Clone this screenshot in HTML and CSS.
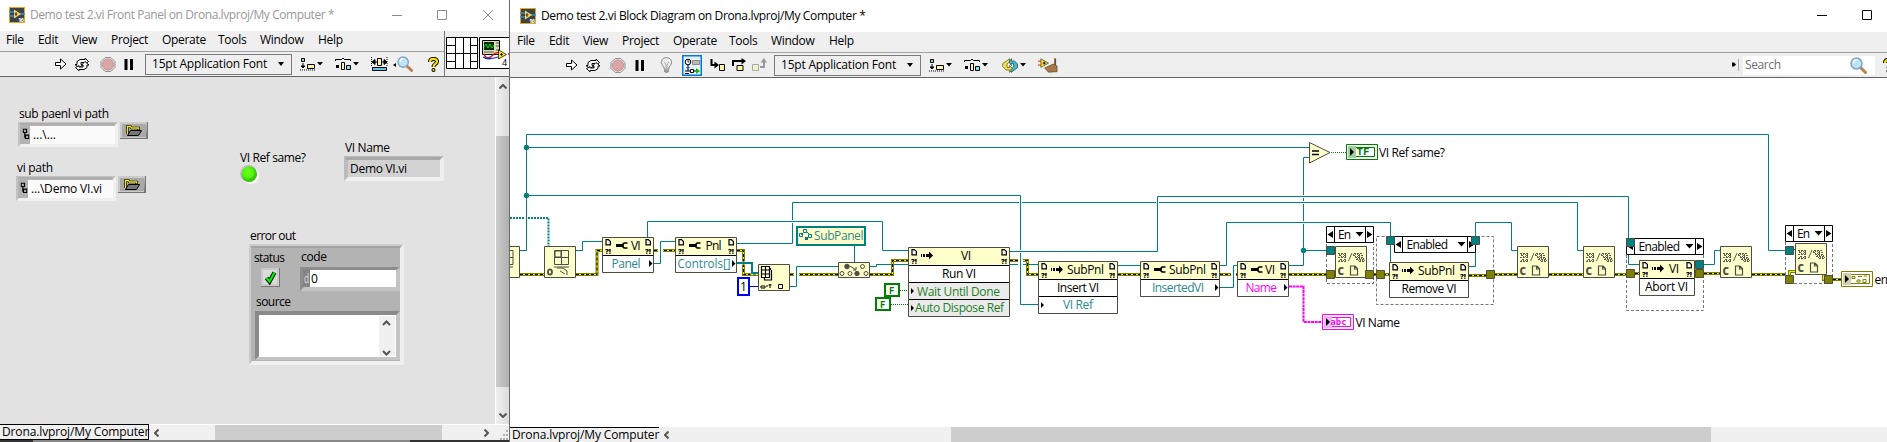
FILE: index.html
```html
<!DOCTYPE html>
<html lang="en">
<head>
<meta charset="utf-8">
<title>Demo test 2.vi</title>
<link rel="stylesheet" href="styles.css">
</head>
<body>
<svg class="defs" width="0" height="0">
  <defs>
    <symbol id="i-app" viewBox="0 0 16 16"><rect width="16" height="16" fill="#e3a81e"/><rect x="1" y="1" width="14" height="14" fill="#3c4248"/><path d="M0 5h5M0 9h5M11 7h5" stroke="#3a8bd0" stroke-width="1.5"/><path d="M5 2.5v9l7-4.500z" fill="#ffd85a"/><path d="M7 5v4M5.500 7h3" stroke="#333"/><text x="9" y="15" font-size="6" font-weight="700" fill="#fff" textLength="6">16</text></symbol>
    <symbol id="i-run" viewBox="0 0 12 12"><path d="M.5 4.500h5V1l5.500 5-5.500 5V7.500h-5z" fill="#fff" stroke="#000"/></symbol>
    <symbol id="i-cont" viewBox="0 0 16 14"><path d="M3 7V4l3-2h5V.7l3.500 3.300-3.500 3V5H7v2h2L5 10.500 1 7z" fill="#fff" stroke="#000"/><path d="M13 7.500v2.500l-3 2H5v1.300L1.500 10 5 8v1.500h4V7.500H7.500L11 4l4 3.500z" fill="#fff" stroke="#000"/></symbol>
    <symbol id="i-abort" viewBox="0 0 16 16"><path d="M5 .5h6L15.500 5v6L11 15.500H5L.5 11V5z" fill="#e8e8e8" stroke="#8a8a8a"/><circle cx="8" cy="8" r="6" fill="#dba6a6" stroke="#b98686" stroke-width=".8"/></symbol>
    <symbol id="i-pause" viewBox="0 0 10 11"><path d="M.5 0h3v11h-3zM6 0h3v11H6z" fill="#000"/></symbol>
    <symbol id="i-align" viewBox="0 0 23 14"><path d="M1.500 1.500h3v3h-3z" fill="#7fe0f0" stroke="#000"/><path d="M3 6v4M1 9l2 2 2-2z" stroke="#000"/><path d="M7.500 7.500h7v4h-7z" fill="#fff4a0" stroke="#000"/><path d="M0 13h16" stroke="#000" stroke-dasharray="1 1"/><path d="M17 5h6l-3 3.500z"/></symbol>
    <symbol id="i-dist" viewBox="0 0 24 14"><path d="M.5 4V2.500h6l1.500-1.500 1.500 1.500h6V4" fill="none" stroke="#000"/><path d="M1 8h3v3H1z"/><path d="M6.500 5.500h3v7h-3z" fill="#fff4a0" stroke="#000"/><path d="M11.500 8.500h4v4h-4z" fill="#7fe0f0" stroke="#000"/><path d="M18 5h6l-3 3.500z"/></symbol>
    <symbol id="i-size" viewBox="0 0 17 14"><path d="M.5 0v9M16 0v9" stroke="#000" stroke-dasharray="1 1"/><path d="M1 5l3-2.500v5zM16 5l-3-2.500v5zM4 5h2M11 5h2" stroke="#000"/><path d="M6.500 1.500h4v7h-4z" fill="#fff4a0" stroke="#000"/><path d="M1.500 10.500h14v3h-14z" fill="#5cc8e8" stroke="#000"/></symbol>
    <symbol id="i-mag" viewBox="0 0 17 17"><path d="M10 10l5.500 5.500" stroke="#b9824a" stroke-width="3" stroke-linecap="round"/><circle cx="6.500" cy="6.500" r="5.500" fill="#bfe4fa" stroke="#7fa6c4" stroke-width="1.500"/><path d="M3.500 6a3 3 0 0 1 3-3" stroke="#fff" fill="none" stroke-width="1.500"/></symbol>
    <symbol id="i-help" viewBox="0 0 11 15"><path d="M2 5c0-4 7-4 7-.5C9 7 5.500 7 5.500 10" fill="none" stroke="#000" stroke-width="4"/><circle cx="5.500" cy="13" r="2"/><path d="M2 5c0-4 7-4 7-.5C9 7 5.500 7 5.500 10" fill="none" stroke="#f5e100" stroke-width="2.200"/><circle cx="5.500" cy="13" r="1.100" fill="#f5e100"/></symbol>
    <symbol id="i-bulb" viewBox="0 0 13 16"><path d="M4 10C0 7 .5.700 6.500.7S13 7 9 10v2H4z" fill="#eee" stroke="#888"/><path d="M4.500 5l1.500 3v3M8.500 5L7 8v3" stroke="#aaa" fill="none"/><path d="M4 12.500h5v2L7.500 16h-2L4 14.500z" fill="#999"/></symbol>
    <symbol id="i-retain" viewBox="0 0 20 21"><path d="M.75.750h18.500v19.500H.750z" fill="#e6f1fb" stroke="#0078d7" stroke-width="1.500"/><circle cx="6" cy="7" r="2.800" fill="#fff" stroke="#000"/><path d="M6 5v2h1.500" stroke="#000" fill="none" stroke-width=".8"/><path d="M10.500 5.500h7v4h-7z" fill="#bbb" stroke="#888"/><path d="M6 10v6M3 16h11" stroke="#000"/><path d="M4 12l2 2.500L8 12z" fill="#2060d0"/><path d="M8.500 14.500h3v3h-3z" fill="#fff" stroke="#000"/><path d="M14 13l4 3-4 3z" fill="#12b312"/><path d="M3 18.500h4" stroke="#000"/></symbol>
    <symbol id="i-into" viewBox="0 0 15 14"><path d="M1.500 1v6H6" stroke="#000" fill="none" stroke-width="2"/><path d="M4.500 3.500L9 7l-4.500 3.500z"/><path d="M9.500 6.500h5v6h-5z" fill="#fff4a0" stroke="#000"/></symbol>
    <symbol id="i-over" viewBox="0 0 15 14"><path d="M1 8V3h9" stroke="#000" fill="none" stroke-width="2"/><path d="M9.500 0L14 3 9.500 6.500z"/><path d="M5 7.500h6v5H5z" fill="#fff4a0" stroke="#000"/></symbol>
    <symbol id="i-out" viewBox="0 0 15 14"><path d="M.5 6.500h6v6h-6z" fill="#f6f2cc" stroke="#aaa"/><path d="M8 9h4V4" stroke="#999" fill="none" stroke-width="2"/><path d="M8.500 4.500L12 0l3 4.500z" fill="#999"/></symbol>
    <symbol id="i-reorder" viewBox="0 0 24 15"><path d="M7.500.7v3L5 6v3.500h2.500V7.500l3.500 3.500-3.500 3.300V12H4L.7 8.500V5.500L4.500 3z" fill="#f3e24a" stroke="#77702a" stroke-width=".9"/><path d="M9 14.300v-3L11.500 9V5.500H9l.5 2L7 4 9.500.7V3h3l3 3v3.500L12.500 12z" fill="#4cb6c4" stroke="#24666e" stroke-width=".9"/><path d="M18 5h6l-3 3.500z"/></symbol>
    <symbol id="i-clean" viewBox="0 0 21 15"><path d="M0 3h4M0 7h4" stroke="#e02020"/><path d="M3 .5v9L11 5z" fill="#ffe01e" stroke="#333" stroke-width=".7"/><path d="M5 5h3M6.500 3.500v3" stroke="#000"/><path d="M17 0h2v7h-2z" fill="#7a4a1e"/><path d="M7 10l9-4 4 2v6l-9 .5z" fill="#a8794a" stroke="#5e3c1c" stroke-width=".7"/></symbol>
    <symbol id="i-folder" viewBox="0 0 28 17"><path d="M0 0h28v17H0z" fill="#747474"/><path d="M0 0h27l-1 16H0z" fill="#cacaca"/><path d="M2 2h24v13H2z" fill="#a9a9a9"/><path d="M7.500 12V4.500h3l1 1.500h7v2" fill="none" stroke="#000" stroke-width="2.600"/><path d="M7.500 12V4.500h3l1 1.500h7v1.500" fill="none" stroke="#f5ee00" stroke-width="1.300"/><path d="M10.500 8.500h11l-3 5h-11z" fill="#777" stroke="#000"/></symbol>
    <symbol id="i-path" viewBox="0 0 7 11"><path d="M.7.700h3.300v3.300H.700zM3 6.700h3.300V10H3zM2.300 4v4.500H3" fill="none" stroke="#000" stroke-width="1.200"/></symbol>
    <symbol id="n-io" viewBox="0 0 6 16"><path d="M1 .6v5.200h4.400V2.500L3.400.6z" fill="#fff" stroke="#000" stroke-width="1.200"/><text x="0" y="14.800" font-size="7.500" font-weight="800" textLength="6" lengthAdjust="spacingAndGlyphs">?!</text></symbol>
    <symbol id="n-prop" viewBox="0 0 12 7"><path d="M0 3.500h7" stroke="#000" stroke-width="3"/><path d="M11.500 1H8.200L7 2.200v2.600L8.200 6h3.300" fill="none" stroke="#000" stroke-width="1.700"/></symbol>
    <symbol id="n-inv" viewBox="0 0 12 9"><path d="M0 4.500h1M2 4.500h2M5 4.500h3" stroke="#000" stroke-width="3"/><path d="M8 .5l4 4-4 4z"/></symbol>
    <symbol id="n-close" viewBox="0 0 32 32"><path d="M.5.500h31v31H.500z" fill="#ffffcc" stroke="#4d4d40"/><path d="M3 7.500h9M4 9.500h3M9 9.500h3M3 11.500h9M5 13.500h2M9 13.500h3M3 15.500h9M19 7.500h8M18 9.500h3M23 9.500h6M20 11.500h9M21 13.500h9M24 15.500h5" fill="none" stroke="#5b5b4c" stroke-dasharray="2 1"/><path d="M4 8.500h8M6 10.500h5M4 14.500h8M20 10.500h6M22 12.500h7M23 14.500h7M18 8.500h8" stroke="#5b5b4c" stroke-dasharray="1 1"/><path d="M13.500 15l3.500-8" stroke="#5b5b4c"/><text x="2.500" y="29" font-size="10" font-weight="800" fill="#4d4d40">C</text><path d="M15.500 20v9h7v-6.500L20 20zM19.500 20v3h3" fill="none" stroke="#4d4d40" stroke-width="1.200"/></symbol>
    <symbol id="n-tt" viewBox="0 0 9 9"><path d="M.5.500h8v8h-8z" fill="#008080" stroke="#4d4d40"/></symbol>
    <symbol id="n-te" viewBox="0 0 9 9"><path d="M.5.500h8v8h-8z" fill="#808000" stroke="#4d4d40"/></symbol>
    <symbol id="n-en" viewBox="0 0 48 18"><path d="M.5.500h47v16H.500zM8.500 0v17M39.500 0v17" fill="#fff" stroke="#000"/><path d="M7 5v7L1.500 8.500zM41 5v7l5.500-3.500zM29.500 6h8l-4 4.500z"/></symbol>
    <radialGradient id="led" cx=".42" cy=".38"><stop offset="0" stop-color="#6dff20"/><stop offset=".7" stop-color="#4df40a"/><stop offset="1" stop-color="#36c508"/></radialGradient>
  </defs>
</svg>

<div class="desktop">
  <section class="window front">
    <header class="titlebar">
      <svg class="app"><use href="#i-app"/></svg><span class="title">Demo test 2.vi Front Panel on Drona.lvproj/My Computer *</span>
      <svg class="winbtns" viewBox="0 0 102 12"><path d="M0 6.500h10M45.500 1.500h9v9h-9zM91 1l10 10M101 1L91 11" fill="none" stroke="#8c8c8c"/></svg>
    </header>
    <div class="head">
      <div class="bars">
        <nav class="menu"><span>File</span><span>Edit</span><span>View</span><span class="w37">Project</span><span class="w42">Operate</span><span class="w28">Tools</span><span class="w44">Window</span><span>Help</span></nav>
        <div class="toolbar">
          <svg class="w12 run"><use href="#i-run"/></svg><svg class="w16 g7"><use href="#i-cont"/></svg><svg class="w16 g10"><use href="#i-abort"/></svg><svg class="w10 g8 h11"><use href="#i-pause"/></svg>
          <div class="combo g11"><span>15pt Application Font</span><i></i></div>
          <svg class="w23 g8"><use href="#i-align"/></svg><svg class="w24 g12"><use href="#i-dist"/></svg><svg class="w17 g12"><use href="#i-size"/></svg><svg class="w20 g5 h16" viewBox="0 0 20 16"><path d="M0 9l3-2v4z"/><use href="#i-mag" x="4" width="16" height="16"/></svg><svg class="w11 g15 h15"><use href="#i-help"/></svg>
        </div>
      </div>
      <svg class="pane" viewBox="444 31 65 45"><path d="M444.500 31v45" stroke="#777"/><path d="M446.500 37.500h31v31h-31zM455.500 37v32M463.500 37v32M470.500 37v32M446 45.500h9M446 53.500h31M446 61.500h9M470 45.500h7M470 61.500h7" fill="#fff" stroke="#000"/><path d="M479.500 37.500h31v31h-31z" fill="#fff" stroke="#000"/><path d="M482.500 40.500h17v14h-17z" fill="#dcdcb8" stroke="#000"/><path d="M484 42h10v8h-10z" fill="#002800"/><path d="M484 47l2-3 2 4 2-4 2 4 2-3" stroke="#00e000" fill="none"/><path d="M496 43h3M496 46h3M496 50h3M484 52h10" stroke="#555"/><path d="M484 54c2 6 6 4 9 1s6-3 8-2M508 54h3" stroke="#e00000" fill="none" stroke-width="1.300"/><path d="M483 57c4 3 9 2 15 0" stroke="#1030d0" fill="none" stroke-width="1.300"/><path d="M498.500 50v9l8-4.500z" fill="#ffe800" stroke="#000" stroke-width=".7"/><path d="M500 54.500h3M501.500 53v3" stroke="#000" stroke-width=".8"/><text x="502" y="66" font-size="9">4</text></svg>
    </div>
    <div class="work">
      <svg class="canvas" viewBox="0 77 495 347" width="495" height="347">
        <g class="lbl">
          <text x="19" y="118" textLength="90">sub paenl vi path</text>
          <text x="17" y="172" textLength="36">vi path</text>
          <text x="240" y="162" textLength="66">VI Ref same?</text>
          <text x="345" y="152" textLength="45">VI Name</text>
          <text x="250" y="240" textLength="46">error out</text>
        </g>
        <g id="pf"><path d="M18 122h100v25H18z" fill="#f0f0f0"/><path d="M18 122h100l-3 3H21v19l-3 3z" fill="#c2c2c2"/><path d="M20 123h96l-2 2H20z" fill="#adadad"/><path d="M20 125h95v19H20z" fill="#b3b3b3"/><path d="M30 126h85v18H30z" fill="#fbfbfb"/><use href="#i-path" x="22.500" y="128.500" width="7" height="11"/><use href="#i-folder" x="120" y="122" width="28" height="17"/></g>
        <use href="#pf" x="-2" y="54"/>
        <g class="lbl"><text x="33" y="139" textLength="23">...\...</text><text x="31" y="193" textLength="71">...\Demo VI.vi</text></g>
        <circle cx="250.500" cy="175.500" r="8.500" fill="#fff"/><circle cx="248.500" cy="173.500" r="8.500" fill="#bdbdbd"/><circle cx="249.300" cy="174.300" r="7.700" fill="url(#led)"/>
        <path d="M344 156h100v25H344z" fill="#f0f0f0"/><path d="M344 156h100l-4 4h-92v17l-4 4z" fill="#bbb"/><path d="M346 157h96l-3 3h-93z" fill="#a8a8a8"/><path d="M348 160h92v17h-92z" fill="#d2d2d2"/>
        <g class="lbl"><text x="350" y="173" textLength="57">Demo VI.vi</text></g>
        <path d="M249 244h155v121H249z" fill="#f0f0f0"/><path d="M249 244h155l-4 4v113H253l-4 4z" fill="#cbcbcb"/><path d="M404 244v121H249l4-4h147V248z" fill="#f0f0f0"/><path d="M251 246h149v115H251z" fill="#b3b3b3"/><path d="M251 246h151l-2 2H251z" fill="#a3a3a3"/>
        <path d="M261 268h19v19h-19z" fill="#777"/><path d="M261 268h18v18h-18z" fill="#c9c9c9"/><path d="M263 270h14v14h-14z" fill="#dadada"/><path d="M266.500 278l3 3.500 5-9" fill="none" stroke="#000" stroke-width="4.200"/><path d="M266.500 278l3 3.500 5-9" fill="none" stroke="#00f000" stroke-width="2.300"/>
        <path d="M300 267h100v24H300z" fill="#c4c4c4"/><path d="M300 267h100l-4 3h-92v17l-4 4z" fill="#8d8d8d"/><path d="M303 269h7v18h-7z" fill="#858585"/><path d="M310 270h86v17h-86z" fill="#fff"/>
        <path d="M255 311h145v49H255z" fill="#c4c4c4"/><path d="M255 311h145l-4 4H259v41l-4 4z" fill="#8a8a8a"/><path d="M259 315h137v42H259z" fill="#fff"/><path d="M379 316h16v40h-16z" fill="#f0f0f0"/><path d="M383 325l3.500-3.500 3.500 3.500M383 351l3.500 3.500 3.500-3.500" fill="none" stroke="#555" stroke-width="2"/>
        <g class="lbl"><text x="254" y="262" textLength="31">status</text><text x="301" y="260.500" textLength="26">code</text><text x="256" y="305.500" textLength="35">source</text><text x="304" y="283" fill="#ddd" textLength="5" lengthAdjust="spacingAndGlyphs">d</text><text x="311" y="283">0</text></g>
      </svg>
      <div class="vscroll"><svg class="arr" viewBox="0 0 8 5"><path d="M.5 4.500L4 1l3.500 3.500" fill="none" stroke="#555" stroke-width="2"/></svg><div class="vthumb"></div><svg class="arr" viewBox="0 0 8 5"><path d="M.5.500L4 4 7.500.5" fill="none" stroke="#555" stroke-width="2"/></svg></div>
    </div>
    <footer class="status"><span class="target">Drona.lvproj/My Computer</span><svg class="chev" viewBox="0 0 5 8"><path d="M4.500.5L1 4l3.500 3.500" fill="none" stroke="#555" stroke-width="2"/></svg><div class="hthumb"></div><svg class="chev r" viewBox="0 0 5 8"><path d="M.5.500L4 4 .5 7.500" fill="none" stroke="#555" stroke-width="2"/></svg><svg class="grip" viewBox="0 0 10 10"><path d="M7 0h2v2H7zM4 4h2v2H4zM7 4h2v2H7zM1 8h2v2H1zM4 8h2v2H4zM7 8h2v2H7z" fill="#b0b0b0"/></svg></footer>
    <div class="under"></div>
  </section>

  <section class="window block">
    <header class="titlebar">
      <svg class="app"><use href="#i-app"/></svg><span class="title">Demo test 2.vi Block Diagram on Drona.lvproj/My Computer *</span>
      <svg class="winbtns" viewBox="0 0 56 12"><path d="M0 6.500h10M45.500 1.500h9v9h-9z" fill="none" stroke="#000"/></svg>
    </header>
    <nav class="menu"><span>File</span><span>Edit</span><span>View</span><span class="w37">Project</span><span class="w42">Operate</span><span class="w28">Tools</span><span class="w44">Window</span><span>Help</span></nav>
    <div class="toolbar">
      <svg class="w12 run"><use href="#i-run"/></svg><svg class="w16 g7"><use href="#i-cont"/></svg><svg class="w16 g9"><use href="#i-abort"/></svg><svg class="w10 g9 h11"><use href="#i-pause"/></svg><svg class="w13 g15 h16"><use href="#i-bulb"/></svg><svg class="w20 g9 h21"><use href="#i-retain"/></svg><svg class="w15 g8"><use href="#i-into"/></svg><svg class="w15 g7"><use href="#i-over"/></svg><svg class="w15 g5"><use href="#i-out"/></svg>
      <div class="combo g7"><span>15pt Application Font</span><i></i></div>
      <svg class="w23 g8"><use href="#i-align"/></svg><svg class="w24 g12"><use href="#i-dist"/></svg><svg class="w24 g14 h15"><use href="#i-reorder"/></svg><svg class="w20 g12 h15"><use href="#i-clean"/></svg>
      <svg class="w10 split" viewBox="0 0 10 14"><path d="M3 4.500h2l2 2-2 2H3z"/><path d="M9.500 1v12" stroke="#aaa"/></svg>
      <div class="search"><span>Search</span><svg class="mag"><use href="#i-mag"/></svg></div>
      <svg class="w11 g8 h15"><use href="#i-help"/></svg>
    </div>
    <svg class="canvas" viewBox="510 78 1377 349" width="1377" height="349">
      <g class="wire">
        <path d="M1289 265.500h14.500V157.500h6M1303.500 250.500h23"/>
        <path class="halo" d="M737 243.500h55.500V202.500H1577.500V250.500h6"/><path d="M737 243.500h55.500V202.500H1577.500V250.500h6"/>
        <path d="M876.500 264.500H1038M869 266.500h7.500v-2.500"/>
        <path class="wave" d="M510 218h38.500v28"/>
        <path class="halo" d="M526.500 135v115"/>
        <path class="halo" d="M527 195.500H1020.500V304.500h18"/><path d="M526.500 195.500H1020.500V304.500h18"/>
        <path d="M519 250.500h7.500V134.500H1768.500V250.500h17M526.500 147.500H1309"/>
        <path class="halo" d="M647.500 238v-16.500H882.500V250.500h26"/><path d="M647.500 238v-16.500H882.500V250.500h26"/>
        <path class="halo" d="M1010 251.500h147.500V196.500H1628.500V264.500h11"/><path d="M1010 251.500h147.500V196.500H1628.500V264.500h11"/>
        <path class="halo" d="M1220 265.500h6.500V222.500h164V264"/><path d="M1220 265.500h6.500V222.500h164V264"/>
        <path d="M576 250.500h6.500v-9h20M854.500 246v17M1118 265.500h22M1469 266.500h6.500v-44h36v28h6M1704 264.500h10.500v-14h6M1793 249.500h3"/>
      </g>
      <g id="err">
        <path class="e1" d="M520 274.500h24M576 274.500h21v-24h6M654 250.500h22M737 250.500h6.500v24h15M790 274.500h48M870 274.500h22.500v-14h16M1010 260.500h17.500v14h11M1118 274.500h22M1220 274.500h17M1289 274.500h37M1373 274.500h16M1469 275.500h17M1494 274.500h23M1549 274.500h34M1615 274.500h11M1635 273.500h5M1704 273.500h16M1752 274.500h33M1789.500 278v-6.500h6M1823.500 275v4.500h3M1833 279.500h8"/>
        <path class="e2" d="M520 274.500h24M576 274.500h21v-24h6M654 250.500h22M737 250.500h6.500v24h15M790 274.500h48M870 274.500h22.500v-14h16M1010 260.500h17.500v14h11M1118 274.500h22M1220 274.500h17M1289 274.500h37M1373 274.500h16M1469 275.500h17M1494 274.500h23M1549 274.500h34M1615 274.500h11M1635 273.500h5M1704 273.500h16M1752 274.500h33M1789.500 278v-6.500h6M1823.500 275v4.500h3M1833 279.500h8"/>
        <path class="e3" d="M520 274.500h24M576 274.500h21v-24h6M654 250.500h22M737 250.500h6.500v24h15M790 274.500h48M870 274.500h22.500v-14h16M1010 260.500h17.500v14h11M1118 274.500h22M1220 274.500h17M1289 274.500h37M1373 274.500h16M1469 275.500h17M1494 274.500h23M1549 274.500h34M1615 274.500h11M1635 273.500h5M1704 273.500h16M1752 274.500h33M1833 279.500h8"/>
      </g>
      <g class="wire">
        <path class="halo wide" d="M660.500 246v10M796.500 270v10M1020.500 254v16M1233.500 270v10"/>
        <path d="M654 263.500h6.500v-22h15M790 286.500h6.500v-20h42M1020.500 253v20M1220 287.500h13.500v-22h4"/>
        <path class="halo" d="M738 263h14v10h6"/><path class="thick" d="M737 263h15v10h6"/>
      </g>
      <g fill="#008080"><circle cx="526.500" cy="147.500" r="2.700"/><circle cx="526.500" cy="195.500" r="2.700"/><circle cx="1303.500" cy="250.500" r="2.700"/></g>
      <path d="M750 286.500h8" stroke="#0000f0"/>
      <path d="M900 290.500h8M891 304.500h17M1331 152.500h15" stroke="#008000" stroke-dasharray="1 1"/>
      <path class="mag-wire" d="M1289 286.500h14.500V322h19"/>

      <g class="node">
        <path d="M500.500 246.500h19v31h-19z"/><path d="M510 250.500h3v14h-3M510 257.500h3M510 267h3" class="g"/>
        <path d="M544.500 246.500h31v31h-31z"/><path d="M554.500 250.500h14v14h-14zM561.500 250v14M554 257.500h14M554 267h15" class="g"/><path d="M555 251h6v6h-6z" fill="#77776a" stroke="none"/><path d="M557 268h6l4 3v4M560 271l5 3" class="g"/><ellipse class="g" cx="550" cy="272" rx="2" ry="2.700" stroke-width="1.800"/>
        <path d="M602.500 237.500h51v35h-51zM675.500 237.500h61v35h-61zM908.500 247.500h101v69h-101zM1038.500 261.500h79v52h-79zM1140.500 261.500h79v35h-79zM1237.500 261.500h51v35h-51z"/>
        <path d="M758.500 264.500h31v26h-31z"/><path d="M838.500 262.500h31v15h-31z"/>
      </g>
      <path class="white" d="M603 256h50v16h-50zM676 256h60v16h-60zM909 266h100v17H909zM1039 280h78v33h-78zM1141 280h78v16h-78zM1238 280h50v16h-50z"/>
      <path d="M909 283h100v33H909z" fill="#ebebeb"/>
      <path class="div" d="M603 255.500h50M676 255.500h60M909 265.500h100M909 282.500h100M909 299.500h100M1039 279.500h78M1039 296.500h78M1141 279.500h78M1238 279.500h50"/>
      <g>
        <path d="M761.500 266.500h8v11h-8zM761.500 270h8M761.500 274h8M765.500 266v11M770.500 268v2M771.500 270v10h-7v-2" fill="none" stroke="#000" stroke-width="1.200"/><path d="M761 286h4v2h-4zM766 286h2M770 284v4M768.500 285h3M778.500 284.500h4v4h-4z" fill="none" stroke="#000"/>
        <g fill="none" stroke="#4d4d40"><circle cx="847" cy="266.500" r="2.300" fill="#4d4d40"/><circle cx="842" cy="273.500" r="2"/><circle cx="850" cy="273.500" r="2"/><path d="M850 266l6 4M856 270v-3M856 270h-3"/><circle cx="857" cy="273.500" r="2.200" fill="#4d4d40"/><circle cx="862.500" cy="266.500" r="2"/><circle cx="866" cy="273.500" r="2"/></g>
        <path d="M797 227h68v18h-68z" fill="#ffffcc" stroke="#008080" stroke-width="2"/><path d="M799.500 233.500h3v3h-3zM803.500 229.500h3v3h-3zM808.500 237.500h3v-3h-3zM803 233l-2 2M807 232l2 2" fill="none" stroke="#008080"/><path d="M805 237h3v3h-3z" fill="#008080"/>
        <path d="M738 278h11v17h-11z" fill="#fff" stroke="#0000f0" stroke-width="2"/>
        <path d="M885 284h14v12h-14zM876 298h14v12h-14z" fill="#fff" stroke="#008000" stroke-width="2"/>
        <path d="M1309.500 142.500v20.500l20.500-10.500z" fill="#ffffcc" stroke="#4d4d40"/><path d="M1312 151h7M1312 154.500h7" stroke="#000" stroke-width="1.300"/>
        <path d="M1346.500 144.500h31v15h-31z" fill="#fff" stroke="#008000"/><path d="M1349.500 147.500h25v9h-25z" fill="#fff" stroke="#008000"/><path d="M1348 146h8v12h-8z" fill="#9fce9f"/><path d="M1350 148v8l4-4z"/>
        <path d="M1322.500 314.500h31v15h-31z" fill="#fff" stroke="#f0f"/><path d="M1325.500 317.500h25v9h-25z" fill="#fff" stroke="#f0f"/><path d="M1324 316h8v12h-8z" fill="#f3b6f3"/><path d="M1326 318v8l4-4z"/>
        <path d="M1841.500 271.500h31v15h-31z" fill="#fff" stroke="#808000"/><path d="M1844.500 274.500h25v9h-25z" fill="#fff" stroke="#808000"/><path d="M1843 273h8v12h-8z" fill="#cfcfa8"/><path d="M1845 275v8l4-4z"/><path d="M1852 276.500h3v2h-3zM1858 276.500h4M1864 276h3M1857 280h3v2h-3zM1863 279.500h3v3h-3z" fill="none" stroke="#808000"/>
      </g>
      <g class="dots"><path d="M1326.500 244v39.500h47V244M1376.500 236.500h117v68h-117zM1626.500 255v55.500h77V255M1785.500 242v41.500h47V242"/></g>
      <g class="node"><path d="M1389.500 262.500h79v35h-79zM1639.500 260.500h55v35h-55z"/></g>
      <path class="white" d="M1390 281h78v16h-78zM1640 279h54v16h-54z"/><path class="div" d="M1390 280.500h78M1640 278.500h54"/>
      <use href="#n-close" x="1335" y="246" width="32" height="32"/><use href="#n-close" x="1517" y="246" width="32" height="32"/><use href="#n-close" x="1583" y="246" width="32" height="32"/><use href="#n-close" x="1720" y="246" width="32" height="32"/><use href="#n-close" x="1795" y="243" width="32" height="32"/>
      <use href="#n-en" x="1326" y="226" width="48" height="18"/><use href="#n-en" x="1785" y="225" width="48" height="18"/>
      <path d="M1394.500 236.500h81v16h-81zM1402.500 236v17M1467.500 236v17M1626.500 238.500h77v16h-77zM1634.500 238v17M1695.500 238v17" fill="#fff" stroke="#000"/>
      <path d="M1401 241v7l-5.500-3.500zM1469 241v7l5.500-3.500zM1457.500 242h8l-4 4.500zM1633 243v7l-5.500-3.500zM1697 243v7l5.500-3.500zM1685.500 244h8l-4 4.500z"/>
      <g><use href="#n-tt" x="1326" y="246" width="9" height="9"/><use href="#n-tt" x="1386" y="236" width="9" height="9"/><use href="#n-tt" x="1471" y="236" width="9" height="9"/><use href="#n-tt" x="1626" y="238" width="9" height="9"/><use href="#n-tt" x="1695" y="260" width="9" height="9"/><use href="#n-tt" x="1785" y="246" width="9" height="9"/>
      <use href="#n-te" x="1326" y="270" width="9" height="9"/><use href="#n-te" x="1365" y="270" width="9" height="9"/><use href="#n-te" x="1376" y="270" width="9" height="9"/><use href="#n-te" x="1486" y="270" width="9" height="9"/><use href="#n-te" x="1626" y="269" width="9" height="9"/><use href="#n-te" x="1695" y="269" width="9" height="9"/><use href="#n-te" x="1785" y="275" width="9" height="9"/><use href="#n-te" x="1824" y="275" width="9" height="9"/></g>
      <g>
        <use href="#n-io" x="605" y="239" width="6" height="16"/><use href="#n-io" x="645" y="239" width="6" height="16"/><use href="#n-io" x="678" y="239" width="6" height="16"/><use href="#n-io" x="728" y="239" width="6" height="16"/>
        <use href="#n-io" x="911" y="249" width="6" height="16"/><use href="#n-io" x="1001" y="249" width="6" height="16"/><use href="#n-io" x="1041" y="263" width="6" height="16"/><use href="#n-io" x="1109" y="263" width="6" height="16"/><use href="#n-io" x="1143" y="263" width="6" height="16"/><use href="#n-io" x="1211" y="263" width="6" height="16"/><use href="#n-io" x="1240" y="263" width="6" height="16"/><use href="#n-io" x="1280" y="263" width="6" height="16"/><use href="#n-io" x="1392" y="264" width="6" height="16"/><use href="#n-io" x="1460" y="264" width="6" height="16"/><use href="#n-io" x="1642" y="262" width="6" height="16"/><use href="#n-io" x="1686" y="262" width="6" height="16"/>
        <use href="#n-prop" x="616" y="242" width="12" height="7"/><use href="#n-prop" x="689" y="242" width="12" height="7"/><use href="#n-prop" x="1154" y="266" width="12" height="7"/><use href="#n-prop" x="1251" y="266" width="12" height="7"/>
        <use href="#n-inv" x="921" y="251" width="12" height="9"/><use href="#n-inv" x="1051" y="265" width="12" height="9"/><use href="#n-inv" x="1402" y="266" width="12" height="9"/><use href="#n-inv" x="1652" y="264" width="12" height="9"/>
        <path d="M649 260v7l3.500-3.500zM732 260v7l3.500-3.500zM1215 284v7l3.500-3.500zM1284 284v7l3.500-3.500zM911 288v6l3-3zM911 305v6l3-3zM1041 302v6l3-3z"/>
      </g>
      <g class="lbl">
        <text x="631" y="250" textLength="9.500">VI</text><text x="705.500" y="250" textLength="16">Pnl</text><text x="961" y="260" textLength="10">VI</text><text x="942" y="278" textLength="34">Run VI</text>
        <text x="1067" y="274" textLength="37">SubPnl</text><text x="1057" y="291.500" textLength="42">Insert VI</text><text x="1169" y="274" textLength="37">SubPnl</text><text x="1265" y="274" textLength="10">VI</text>
        <text x="1418" y="275" textLength="37">SubPnl</text><text x="1401.500" y="293" textLength="55">Remove VI</text><text x="1669" y="273" textLength="10">VI</text><text x="1645" y="291" textLength="43">Abort VI</text>
        <text x="1338" y="239" textLength="13">En</text><text x="1797" y="238" textLength="13">En</text><text x="1406.500" y="249" textLength="41.500">Enabled</text><text x="1638.500" y="251" textLength="41.500">Enabled</text>
        <text x="1379" y="157" textLength="66">VI Ref same?</text><text x="1355.500" y="327" textLength="44.500">VI Name</text><text x="1874.500" y="284" textLength="46">error out</text><text x="740" y="291">1</text>
        <g class="teal"><text x="611.500" y="268" textLength="29">Panel</text><text x="677.500" y="268" textLength="53" lengthAdjust="spacingAndGlyphs">Controls[]</text><text x="814" y="240" textLength="49.500">SubPanel</text><text x="1063" y="308.500" textLength="30">VI Ref</text><text x="1152" y="292" textLength="52">InsertedVI</text></g>
        <g class="green"><text x="917" y="295.500" textLength="83">Wait Until Done</text><text x="915" y="312" textLength="89">Auto Dispose Ref</text></g>
        <text class="pink" x="1245.500" y="292" textLength="31.500">Name</text>
      </g>
      <g class="mono"><text x="889" y="293.500" fill="#008000">F</text><text x="880" y="307.500" fill="#008000">F</text><text x="1356.500" y="155" fill="#008000" textLength="13" lengthAdjust="spacingAndGlyphs">TF</text><text x="1330.500" y="325" fill="#f0f" textLength="16" lengthAdjust="spacingAndGlyphs">abc</text></g>
    </svg>
    <footer class="status"><span class="target">Drona.lvproj/My Computer</span><svg class="chev" viewBox="0 0 5 8"><path d="M4.500.5L1 4l3.500 3.500" fill="none" stroke="#555" stroke-width="2"/></svg><div class="hthumb"></div></footer>
  </section>
</div>
</body>
</html>
```
FILE: styles.css
```css
* { box-sizing: border-box; }
body { margin: 0; overflow: hidden; font: 12px/16px "Open Sans", "Noto Sans", sans-serif; color: #000; }
svg { display: block; flex: none; }
.defs { position: absolute; }
.desktop { display: flex; width: 1887px; height: 442px; background: #fff; }
.window { display: flex; flex-direction: column; flex: none; height: 442px; white-space: nowrap; overflow: hidden; }
.front { width: 510px; border-right: 1px solid #6a6a6a; }
.block { width: 1377px; }

.titlebar { display: flex; align-items: center; height: 31px; flex: none; background: #fff; padding: 0 15px 2px 9px; }
.block .titlebar { height: 32px; padding: 0 14px 1px 10px; }
.app { width: 16px; height: 16px; margin-right: 5px; }
.title { color: #999; letter-spacing: -0.43px; }
.block .title { color: #000; letter-spacing: -0.35px; }
.winbtns { width: 102px; height: 12px; margin-left: auto; }
.block .winbtns { width: 56px; margin-top: -1px; }

.head { display: flex; height: 46px; flex: none; background: #efefef; border-bottom: 1px solid #646464; }
.bars { width: 444px; }
.pane { width: 65px; height: 45px; }
.menu { display: flex; gap: 14px; height: 21px; flex: none; padding: 1px 6px 0; background: #efefef; border-bottom: 1px solid #a0a0a0; letter-spacing: -0.3px; }
.menu span { flex: none; width: 20px; }
.menu span:nth-child(1) { width: 18px; }
.menu span:nth-child(3) { width: 25px; }
.menu .w37 { width: 37px; }
.menu .w42 { width: 42px; }
.menu .w28 { width: 28px; }
.menu .w44 { width: 44px; }
.block .menu { padding-left: 7px; }

.toolbar { display: flex; align-items: center; height: 24px; flex: none; padding-left: 55px; background: #efefef; }
.block .toolbar { height: 25px; padding-left: 56px; border-bottom: 1px solid #646464; }
.toolbar svg { height: 14px; }
.toolbar .run { height: 12px; }
.toolbar .h11 { height: 11px; }
.toolbar .h15 { height: 15px; }
.toolbar .h16 { height: 16px; }
.toolbar .h21 { height: 21px; }
.toolbar .w16 { height: 15px; }
.w10 { width: 10px; } .w11 { width: 11px; } .w12 { width: 12px; } .w13 { width: 13px; }
.w15 { width: 15px; } .w16 { width: 16px; } .w17 { width: 17px; } .w20 { width: 20px; }
.w23 { width: 23px; } .w24 { width: 24px; }
.g5 { margin-left: 5px; } .g7 { margin-left: 7px; } .g8 { margin-left: 8px; } .g9 { margin-left: 9px; }
.g10 { margin-left: 10px; } .g11 { margin-left: 11px; } .g12 { margin-left: 12px; } .g14 { margin-left: 14px; } .g15 { margin-left: 15px; }
.combo { display: flex; align-items: center; justify-content: space-between; flex: none; width: 147px; height: 21px; padding: 0 7px 1px 6px; border: 1px solid #7a7a7a; background: #efefef; letter-spacing: -0.2px; }
.combo i { border: 3.5px solid transparent; border-top: 4px solid #000; border-bottom: 0; }
.split { margin-left: auto; }
.search { display: flex; align-items: center; justify-content: space-between; flex: none; width: 132px; height: 19px; margin-left: 4px; padding: 0 8px 0 2px; background: #fff; color: #6d6d6d; letter-spacing: -0.4px; }
.search .mag { width: 17px; height: 17px; }
.block .toolbar > svg:last-child { margin-right: -7px; }

.work { display: flex; height: 347px; flex: none; }
.front .canvas { background: #e2e2e2; }
.block .canvas { background: #fff; }
.vscroll { display: flex; flex-direction: column; align-items: center; width: 14px; border-left: 1px solid #fff; background: linear-gradient(90deg, #f0f0f0, #dcdcdc); }
.vscroll .arr { width: 8px; height: 5px; margin: 7px 0 0 1px; }
.vthumb { width: 100%; height: 251px; margin-top: 47px; background: linear-gradient(90deg, #cdcdcd, #b0b0b0); }
.vthumb + .arr { margin-top: 26px; }

.status { display: flex; align-items: center; height: 16px; flex: none; background: #f0f0f0; border-top: 1px solid #fff; }
.block .status { height: 15px; border: 0; }
.target { align-self: stretch; flex: none; width: 149px; margin-top: -1px; padding-left: 2px; border: 1px solid #000; border-left: 0; line-height: 14px; letter-spacing: -0.13px; }
.block .target { margin-top: 0; border-width: 1px 0 0; }
.chev { width: 5px; height: 8px; margin-left: 5px; }
.hthumb { width: 228px; height: 100%; margin-left: 56px; background: #cdcdcd; }
.front .chev.r { margin-left: 42px; }
.grip { width: 10px; height: 10px; margin-left: 10px; align-self: flex-end; }
.block .hthumb { width: 760px; margin-left: 282px; }
.under { height: 2px; background: linear-gradient(90deg, #333 0 33px, #888 33px 410px, #333 410px); }

.lbl text { font-size: 12px; }
.wire path { fill: none; stroke: #008080; }
.wire .halo { stroke: #fff; stroke-width: 3; }
.wire .wide { stroke-width: 5; }
.wire .thick { stroke-width: 2; }
.wire .wave { stroke-width: 2; stroke-dasharray: 2 1; }
.mag-wire { fill: none; stroke: #f0f; stroke-width: 2; stroke-dasharray: 3 .6; }
#err path { fill: none; }
.e1 { stroke: #808000; stroke-width: 3; }
.e2 { stroke: #f0f000; stroke-width: 1; }
.e3 { stroke: #000; stroke-width: 1; stroke-dasharray: 3 2; }
.node > * { fill: #ffffcc; stroke: #4d4d40; }
.node .g { fill: none; }
.white { fill: #fff; }
.div { stroke: #000; }
.dots path { fill: none; stroke: #777; stroke-dasharray: 3 2; }
.teal { fill: #2a8a8e; }
.green { fill: #1f7f1f; }
.pink { fill: #f0f; }
.mono text { font: 700 9px "DejaVu Sans Mono", monospace; }
```
